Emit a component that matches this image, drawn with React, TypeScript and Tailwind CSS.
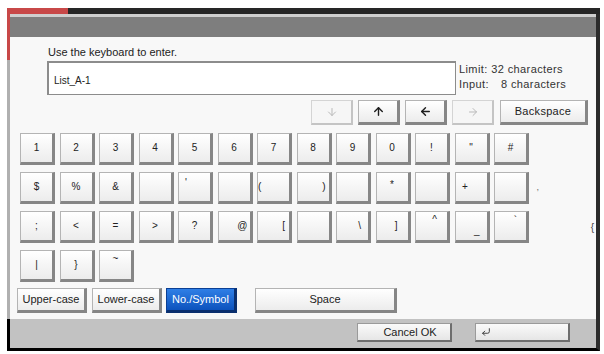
import React from 'react';
import { ArrowDown, ArrowUp, ArrowLeft, ArrowRight, CornerDownLeft } from 'lucide-react';

type KeyDef = { c: string; align?: string };

const C = 'items-center justify-center';

const rows: KeyDef[][] = [
  ['1', '2', '3', '4', '5', '6', '7', '8', '9', '0', '!', '"', '#'].map(c => ({ c })),
  [
    { c: '$' }, { c: '%' }, { c: '&' }, { c: '' },
    { c: "'", align: 'items-start justify-start pl-[6px] pt-[5px]' },
    { c: '' },
    { c: '(', align: 'items-center justify-start pl-0' },
    { c: ')', align: 'items-center justify-end pr-[3px]' },
    { c: '' }, { c: '*', align: 'items-start justify-center pt-[7px]' }, { c: '' },
    { c: '+', align: 'items-center justify-center pr-[12px]' },
    { c: '' },
  ],
  [
    { c: ';' }, { c: '<' }, { c: '=' }, { c: '>' }, { c: '?' },
    { c: '@', align: 'items-center justify-end pr-[2px]' },
    { c: '[', align: 'items-center justify-end pr-[4px]' },
    { c: '' },
    { c: '\\', align: 'items-center justify-end pr-[7px]' },
    { c: ']', align: 'items-center justify-end pr-[10px]' },
    { c: '^', align: 'items-start justify-end pr-[10px] pt-[3px]' },
    { c: '_', align: 'items-end justify-end pr-[7px] pb-[4px]' },
    { c: '`', align: 'items-start justify-end pr-[9px] pt-[4px]' },
  ],
  [{ c: '|' }, { c: '}' }, { c: '~', align: 'items-start justify-center pt-[3px]' }],
];

const face =
  'border border-[#b4b4b4] border-r-[3px] border-b-[3px] border-r-[#868686] border-b-[#868686] bg-linear-to-b from-white to-[#ececec]';

const Key = ({ c, align = C }: KeyDef) => (
  <div className={`flex h-[32px] w-[35px] shrink-0 ${face} text-[10px] leading-none text-[#222] ${align}`}>
    {c}
  </div>
);

const ArrowBtn = ({ children, off }: { children: React.ReactNode; off?: boolean }) => (
  <div
    className={
      off
        ? 'flex h-[25px] w-[42px] items-center justify-center border border-[#d4d4d4] border-r-2 border-b-2 border-r-[#c4c4c4] border-b-[#c4c4c4] bg-[#f6f6f6]'
        : `flex h-[25px] w-[42px] items-center justify-center ${face}`
    }
  >
    {children}
  </div>
);

const ModeBtn = ({ label, w, active }: { label: string; w: string; active?: boolean }) => (
  <div
    className={
      active
        ? `flex h-[25px] ${w} items-center justify-center border border-[#0b3f94] border-r-[3px] border-b-[3px] border-r-[#0a2f6e] border-b-[#0a2f6e] bg-linear-to-b from-[#2f7fe6] to-[#0c52bd] text-[11px] text-white`
        : `flex h-[25px] ${w} items-center justify-center ${face} text-[11px] text-[#222]`
    }
  >
    {label}
  </div>
);

export default function App() {
  return (
    <div className="h-[354px] w-[604px] overflow-hidden bg-white pt-[8px] pl-[7px] font-['Liberation_Sans',Arial,sans-serif]">
      <div className="w-[593px]">
        {/* top edge */}
        <div className="flex h-[6px]">
          <div className="w-[61px] bg-[#c84848]" />
          <div className="flex-1 bg-[#262626]" />
        </div>

        <div className="flex">
          <div className="flex w-[3px] flex-col">
            <div className="h-[46px] bg-[#c84848]" />
            <div className="flex-1 bg-[#b0b0b0]" />
          </div>

          <div className="flex w-[586px] flex-col">
            <div className="h-[3px] bg-[#cfcfcf]" />
            <div className="h-[20px] bg-[#7e7e7e]" />

            <div className="flex h-[282px] flex-col bg-[#f8f8f8]">
              <div className="ml-[38px] mt-[9px] h-[13px] text-[11px] leading-[13px] text-[#222]">
                Use the keyboard to enter.
              </div>

              <div className="ml-[37px] mt-[2px] flex h-[34px]">
                <div className="flex w-[409px] items-center border border-t-2 border-l-2 border-[#8c8c8c] bg-white pl-[5px] pt-[3px] text-[10px] text-[#222]">
                  List_A-1
                </div>
                <div className="ml-[3px] pt-[1px] text-[11px] leading-[15px] tracking-[0.4px] text-[#333]">
                  <div>Limit: 32 characters</div>
                  <div>
                    Input:<span className="ml-[12px]">8 characters</span>
                  </div>
                </div>
              </div>

              <div className="ml-[301px] mt-[5px] flex h-[25px] gap-[5px]">
                <ArrowBtn off>
                  <ArrowDown size={12} strokeWidth={2} color="#b9b9b9" />
                </ArrowBtn>
                <ArrowBtn>
                  <ArrowUp size={13} strokeWidth={2.6} color="#1e1e1e" />
                </ArrowBtn>
                <ArrowBtn>
                  <ArrowLeft size={13} strokeWidth={2.6} color="#1e1e1e" />
                </ArrowBtn>
                <ArrowBtn off>
                  <ArrowRight size={12} strokeWidth={2} color="#b9b9b9" />
                </ArrowBtn>
                <div className={`ml-[1px] flex h-[25px] w-[88px] items-center justify-center ${face} text-[11px] tracking-[0.3px] text-[#222]`}>
                  Backspace
                </div>
              </div>

              <div className="mt-[8px] flex flex-col gap-[7px] pl-[10px]">
                {rows.map((row, i) => (
                  <div key={i} className="flex h-[32px] gap-[4.5px]">
                    {row.map((k, j) => (
                      <Key key={j} c={k.c} align={k.align} />
                    ))}
                    {i === 1 && <span className="self-center pl-[3px] text-[9px] text-[#666]">,</span>}
                    {i === 2 && <span className="ml-auto self-center pr-[2px] text-[10px] text-[#444]">{'{'}</span>}
                  </div>
                ))}
              </div>

              <div className="ml-[7px] mt-[6px] flex h-[25px]">
                <ModeBtn label="Upper-case" w="w-[70px]" />
                <div className="ml-[5px]">
                  <ModeBtn label="Lower-case" w="w-[70px]" />
                </div>
                <div className="ml-[4px]">
                  <ModeBtn label="No./Symbol" w="w-[71px]" active />
                </div>
                <div className="ml-[18px]">
                  <ModeBtn label="Space" w="w-[142px]" />
                </div>
              </div>
            </div>
          </div>

          <div className="w-[4px] bg-[#2b2b2b]" />
        </div>

        {/* bottom bar */}
        <div className="flex h-[32px] gap-[23px] border-l-[3px] border-b-[3px] border-r-[4px] border-l-black border-b-black border-r-[#2b2b2b] bg-[#c2c2c2] pl-[347px] pt-[4px]">
          <div className="flex h-[19px] w-[95px] items-center justify-center border border-[#9a9a9a] border-r-2 border-b-2 border-r-[#6e6e6e] border-b-[#6e6e6e] bg-linear-to-b from-[#fafafa] to-[#e6e6e6] pl-[12px] text-[11px] text-[#222]">
            Cancel OK
          </div>
          <div className="flex h-[19px] w-[95px] items-center border border-[#9a9a9a] border-r-2 border-b-2 border-r-[#6e6e6e] border-b-[#6e6e6e] bg-linear-to-b from-[#fafafa] to-[#e6e6e6] pl-[5px]">
            <CornerDownLeft size={10} strokeWidth={2.2} color="#333" />
          </div>
        </div>
      </div>
    </div>
  );
}
